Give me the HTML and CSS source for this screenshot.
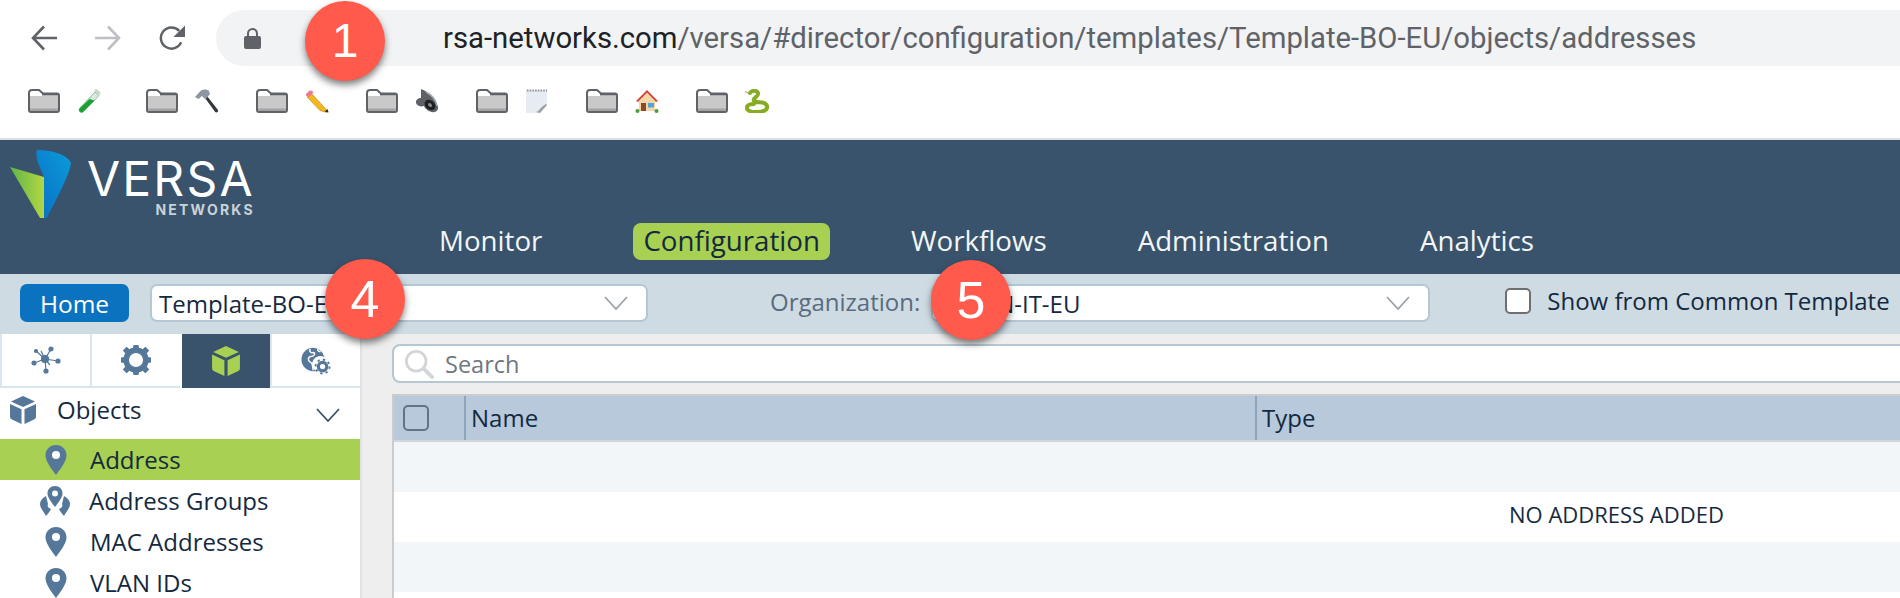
FILE: index.html
```html
<!DOCTYPE html>
<html lang="en">
<head>
  <meta charset="UTF-8" />
  <title>Versa Director - Addresses</title>
  <meta name="viewport" content="width=device-width, initial-scale=1.0" />
  <link rel="stylesheet" href="styles.css">
</head>
<body>

<svg class="icon-defs" aria-hidden="true">
  <symbol id="folder" viewBox="0 0 32 24">
    <path d="M1 4a3 3 0 0 1 3-3h7l4 3.500h14a2 2 0 0 1 2 2V21a2 2 0 0 1-2 2H3a2 2 0 0 1-2-2z" fill="#fff" stroke="#5f6368" stroke-width="2"/>
    <path d="M2 7h28v14a1 1 0 0 1-1 1H3a1 1 0 0 1-1-1z" fill="#c9c9c9"/>
    <path d="M2 19.500h28V21a1 1 0 0 1-1 1H3a1 1 0 0 1-1-1z" fill="#a3a3a3"/>
    <path d="M14 5.500h16" stroke="#5f6368" stroke-width="2"/>
  </symbol>
  <symbol id="pin" viewBox="0 0 22 30">
    <path d="M11 0C5 0 .5 4.500.5 10.500c0 6 6.500 14 10.500 19.500 4-5.500 10.500-13.500 10.500-19.500C21.500 4.500 17 0 11 0z" fill="#54779a"/>
    <circle cx="11" cy="10" r="4" fill="#fff"/>
  </symbol>
  <symbol id="cube" viewBox="0 0 26 28">
    <path d="M13 0l12 5.500-12 5.500L1 5.500z"/>
    <path d="M0 8l11.500 5.300V28L2 23.500a3 3 0 0 1-2-2.800z"/>
    <path d="M26 8l-11.500 5.300V28L24 23.500a3 3 0 0 0 2-2.800z"/>
  </symbol>
  <symbol id="chev" viewBox="0 0 24 14">
    <path d="M1 1l11 12L23 1" fill="none" stroke="currentColor" stroke-width="1.800"/>
  </symbol>
</svg>

<div class="chrome">
  <div class="browser-bar">
    <svg class="nav-icon" viewBox="0 0 26 26"><path d="M26 13H3M13 1.500L2 13l11 11.500" fill="none" stroke="#5f6368" stroke-width="2.600"/></svg>
    <svg class="nav-icon" viewBox="0 0 26 26"><path d="M0 13h23M13 1.500L24 13 13 24.500" fill="none" stroke="#bdbfc2" stroke-width="2.600"/></svg>
    <svg class="nav-icon" viewBox="0 0 27 26"><path d="M23 17.500A11 11 0 1 1 21 5.500" fill="none" stroke="#5f6368" stroke-width="2.600"/><path d="M27 0v12H15z" fill="#5f6368"/></svg>
    <div class="url-bar">
      <svg class="lock" viewBox="0 0 17 21"><path d="M4 9V5.500a4.500 4.500 0 0 1 9 0V9" fill="none" stroke="#5f6368" stroke-width="2"/><rect y="8" width="17" height="13" rx="2" fill="#5f6368"/></svg>
      <span class="url"><b>rsa-networks.com</b>/versa/#director/configuration/templates/Template-BO-EU/objects/addresses</span>
    </div>
  </div>
  <div class="bookmarks">
    <div class="bookmark bookmark-first">
      <svg class="folder"><use href="#folder"/></svg>
      <svg class="emoji" viewBox="0 0 24 24"><path d="M18 3l4 3.500L6 23c-2 1.500-5-1-3.500-3.500z" fill="#d8eadb" stroke="#9fb5a3"/><path d="M12.500 10l5 1.500L6 23c-2 1.500-5-1-3.500-3.500z" fill="#16a32e"/><path d="M18 .8l5 4" stroke="#c5d8ca" stroke-width="3"/></svg>
    </div>
    <div class="bookmark">
      <svg class="folder"><use href="#folder"/></svg>
      <svg class="emoji" viewBox="0 0 24 24"><path d="M10 9l2-2 11 14c.8 2-1.500 3-2.800 2z" fill="#33383c"/><path d="M0 8l6-6.500c3-1.500 6-1.500 8 .5l1 3-4.500 5.500L7 7 3.500 10z" fill="#8d97a1"/></svg>
    </div>
    <div class="bookmark">
      <svg class="folder"><use href="#folder"/></svg>
      <svg class="emoji" viewBox="0 0 24 24"><path d="M7 5l16 17.500-1 1-7-2L2 8z" fill="#f4b81f" stroke="#b98510" stroke-width=".6"/><path d="M1 5l3-3c2-1 3.500 0 4.500 1.500L4 8C2 7.500.5 7 1 5z" fill="#e87b8d"/><path d="M23.500 23.500l-4-1 3-2.500z" fill="#333"/></svg>
    </div>
    <div class="bookmark">
      <svg class="folder"><use href="#folder"/></svg>
      <svg class="emoji" viewBox="0 0 24 24"><path d="M6 0c8 3 15 10 17 18 .5 3-2 6-6 5-3-.5-7-3-8-6-3 1-7 0-8-3-.5-3 2-5 5-5z" fill="#5e6267"/><path d="M11 3c6 3 10 8 11 14" fill="none" stroke="#a4a9ae" stroke-width="1.500"/><ellipse cx="15" cy="16" rx="6" ry="4.500" fill="#1e2022" transform="rotate(40 15 16)"/><ellipse cx="15" cy="16" rx="2.200" ry="1.700" fill="#8a8f94" transform="rotate(40 15 16)"/></svg>
    </div>
    <div class="bookmark">
      <svg class="folder"><use href="#folder"/></svg>
      <svg class="emoji" viewBox="0 0 22 24"><path d="M0 1h21v15l-7 8H0z" fill="#e7ecf2"/><path d="M1 1.500h20" stroke="#8c9096" stroke-width="2" stroke-dasharray="1.500 1.200"/><path d="M10 23c4-1 4-5 10-8l1 1-7 8z" fill="#9aa0a6"/></svg>
    </div>
    <div class="bookmark">
      <svg class="folder"><use href="#folder"/></svg>
      <svg class="emoji" viewBox="0 0 24 24"><path d="M4 11h16v11H4z" fill="#f6d6a5"/><path d="M12 1L1 12l2 1 9-9 9 9 2-1z" fill="#d4473c"/><path d="M12 4l8 8H4z" fill="#f6d6a5"/><rect x="6" y="14" width="5" height="8" fill="#8a4b2c"/><rect x="13" y="14" width="6" height="4.500" fill="#4ea5d9"/><circle cx="2.500" cy="22" r="2" fill="#4c9a3c"/><circle cx="21.500" cy="22" r="2" fill="#4c9a3c"/></svg>
    </div>
    <div class="bookmark">
      <svg class="folder"><use href="#folder"/></svg>
      <svg class="emoji" viewBox="0 0 24 24"><path d="M5 4c2-3 7-3 8 0 1 4-6 5-4 8 3 3 11-1 13 5 1 4-4 6-10 6-6 0-11-1-10-5 .5-2 4-3 7-3" fill="none" stroke="#86ad22" stroke-width="4" stroke-linecap="round"/><path d="M0 2.500l3 1.500" stroke="#d87a8a"/></svg>
    </div>
  </div>
</div>

<header class="topbar">
  <div class="logo">
    <svg class="logo-mark" viewBox="0 0 62 68">
      <defs>
        <linearGradient id="logoGreen" x1="0" x2="1" y1="0" y2="0"><stop offset="0" stop-color="#5fb548"/><stop offset="1" stop-color="#b3d743"/></linearGradient>
        <linearGradient id="logoBlue" x1="0" x2="1" y1="1" y2="0"><stop offset="0" stop-color="#0a6fc2"/><stop offset="1" stop-color="#0a9bdc"/></linearGradient>
      </defs>
      <path d="M0 17l34 10v41h-4z" fill="url(#logoGreen)"/>
      <path d="M27 0c14 0 30 4 34 13-2 14-17 40-24 55h-3V27l-3-7c-3-7-6-14-4-20z" fill="url(#logoBlue)"/>
    </svg>
    <div class="logo-text">
      <span class="logo-name">VERSA</span>
      <span class="logo-sub">NETWORKS</span>
    </div>
  </div>
  <nav class="main-nav">
    <a href="#" class="nav-first">Monitor</a>
    <a href="#" class="active">Configuration</a>
    <a href="#">Workflows</a>
    <a href="#">Administration</a>
    <a href="#">Analytics</a>
  </nav>
</header>

<div class="toolbar">
  <button class="home-btn">Home</button>
  <div class="select select-template">
    <span>Template-BO-EU</span>
    <svg class="chev"><use href="#chev"/></svg>
  </div>
  <label class="org-label">Organization:</label>
  <div class="select select-org">
    <span>RSA-N-IT-EU</span>
    <svg class="chev"><use href="#chev"/></svg>
  </div>
  <div class="check-box"></div>
  <span class="check-label">Show from Common Template</span>
</div>

<div class="content">
  <aside class="sidebar">
    <div class="tabs">
      <div class="tab">
        <svg class="tab-icon" viewBox="0 0 30 30" fill="#54779a" stroke="#54779a" stroke-width="1.200">
          <circle cx="14" cy="14" r="3.500"/>
          <path d="M14 14L5 6M14 14L20 4M14 14l13 2M14 14L3 18M14 14l1 12M14 14l-4-8M14 14l5 6" fill="none"/>
          <circle cx="5" cy="6" r="1.500"/><circle cx="20" cy="4" r="2"/><circle cx="27" cy="16" r="2"/><circle cx="3" cy="18" r="2"/><circle cx="15" cy="26" r="2"/>
        </svg>
      </div>
      <div class="tab">
        <svg class="tab-icon" viewBox="0 0 32 32"><circle cx="16" cy="16" r="10.500" fill="none" stroke="#54779a" stroke-width="6"/><g fill="#54779a"><rect x="13" y="0" width="6" height="6" rx="1"/><rect x="13" y="26" width="6" height="6" rx="1"/><rect x="0" y="13" width="6" height="6" rx="1"/><rect x="26" y="13" width="6" height="6" rx="1"/><rect x="3" y="3" width="6" height="6" rx="1" transform="rotate(45 6 6)"/><rect x="23" y="3" width="6" height="6" rx="1" transform="rotate(45 26 6)"/><rect x="3" y="23" width="6" height="6" rx="1" transform="rotate(45 6 26)"/><rect x="23" y="23" width="6" height="6" rx="1" transform="rotate(45 26 26)"/></g></svg>
      </div>
      <div class="tab tab-active">
        <svg class="tab-icon cube"><use href="#cube"/></svg>
      </div>
      <div class="tab">
        <svg class="tab-icon" viewBox="0 0 30 32">
          <path d="M12 3a12.500 12.500 0 1 0 0 25 13 13 0 0 0 3-.400 8 8 0 0 1 9-14.600 12.500 12.500 0 0 0-12-10z" fill="#54779a"/>
          <path d="M9 4c-2 3 1 5 3 4 3 0 1 4-1 4s-5 1-4 4 4 2 4 5l1 6M17 4c-1 2 1 3 3 3" fill="none" stroke="#fff" stroke-width="1.500"/>
          <circle cx="22" cy="23" r="4.500" fill="none" stroke="#54779a" stroke-width="3.400"/>
          <circle cx="22" cy="23" r="7.500" fill="none" stroke="#54779a" stroke-width="2" stroke-dasharray="2.500 3.400"/>
        </svg>
      </div>
    </div>
    <div class="objects-head">
      <svg class="objects-icon"><use href="#cube"/></svg>
      <span>Objects</span>
      <svg class="objects-chev"><use href="#chev"/></svg>
    </div>
    <ul class="object-list">
      <li class="selected"><svg class="pin"><use href="#pin"/></svg>Address</li>
      <li>
        <svg class="pin pin-group" viewBox="0 0 30 30">
          <path d="M15 0c-4.500 0-7.500 3.200-7.500 7.500S12 17 15 21c3-4 7.500-9.200 7.500-13.500S19.500 0 15 0z" fill="#54779a"/>
          <circle cx="15" cy="7.500" r="3" fill="#fff"/>
          <path d="M6 10C2 12 0 15 0 18c0 4 4 8 6 12 2-2 4-5 5-7-3-1-4-3-3-5zM24 10c4 2 6 5 6 8 0 4-4 8-6 12-2-2-4-5-5-7 3-1 4-3 3-5z" fill="#54779a"/>
        </svg>Address Groups
      </li>
      <li><svg class="pin"><use href="#pin"/></svg>MAC Addresses</li>
      <li><svg class="pin"><use href="#pin"/></svg>VLAN IDs</li>
    </ul>
  </aside>

  <main class="main">
    <div class="search">
      <svg class="search-icon" viewBox="0 0 32 32"><circle cx="13" cy="13" r="10.500" fill="none" stroke="#d3d6d8" stroke-width="3"/><path d="M21 21l9 9" stroke="#d3d6d8" stroke-width="4" stroke-linecap="round"/></svg>
      <span>Search</span>
    </div>
    <div class="table">
      <div class="table-head">
        <div class="col-check"><span class="head-check"></span></div>
        <div class="col-name">Name</div>
        <div class="col-type">Type</div>
      </div>
      <div class="table-row"></div>
      <div class="table-row">NO ADDRESS ADDED</div>
      <div class="table-row"></div>
      <div class="table-row"></div>
    </div>
  </main>
</div>

<div class="badge badge-url">1</div>
<div class="badge badge-template">4</div>
<div class="badge badge-org">5</div>

</body>
</html>
```

FILE: styles.css
```css
* {
  box-sizing: border-box;
}
html, body {
  height: 598px;
}
body {
  margin: 0;
  overflow: hidden;
  position: relative;
  background: #fff;
  color: #14293f;
  font-family: 'Open Sans', sans-serif;
}
.icon-defs {
  position: absolute;
  width: 0;
  height: 0;
}

/* browser chrome */
.chrome {
  height: 140px;
  background: #fff;
  border-bottom: 2px solid #dedede;
}
.browser-bar {
  display: flex;
  align-items: center;
  height: 79px;
  padding: 0 0 3px 31px;
}
.nav-icon {
  width: 26px;
  height: 26px;
  margin-right: 38px;
}
.url-bar {
  display: flex;
  align-items: center;
  flex: 1;
  height: 56px;
  margin-left: -7px;
  padding-left: 28px;
  background: #f1f3f4;
  border-radius: 28px 0 0 28px;
}
.lock {
  width: 17px;
  height: 21px;
  margin-right: 182px;
}
.url {
  font-family: Roboto, sans-serif;
  font-size: 29.3px;
  color: #5f6368;
  white-space: nowrap;
}
.url b {
  font-weight: 400;
  color: #202124;
}
.bookmarks {
  display: flex;
  padding: 10px 0 0 28px;
}
.bookmark {
  display: flex;
  align-items: center;
  gap: 17px;
  width: 110px;
  height: 24px;
}
.bookmark-first {
  width: 118px;
}
.folder {
  width: 32px;
  height: 24px;
}
.emoji {
  width: 24px;
  height: 24px;
}

/* versa header */
.topbar {
  height: 134px;
  padding: 10px 0 0 10px;
  background: #38536b;
}
.logo {
  display: flex;
}
.logo-mark {
  width: 62px;
  height: 68px;
}
.logo-text {
  display: flex;
  flex-direction: column;
  align-items: flex-end;
  margin-left: 15px;
  color: #fff;
  font-family: Inter, sans-serif;
  line-height: 1;
}
.logo-name {
  margin-top: 5px;
  font-size: 48px;
  letter-spacing: 2.2px;
}
.logo-sub {
  font-size: 14px;
  font-weight: 700;
  letter-spacing: 2.2px;
  color: #c9d2da;
}
.main-nav {
  display: flex;
  gap: 71px;
  margin: 5px 0 0 419px;
}
.main-nav a {
  height: 37px;
  padding: 0 10px;
  border-radius: 8px;
  color: #f3f5f7;
  font-size: 27.7px;
  line-height: 35px;
  text-decoration: none;
}
.main-nav a.nav-first {
  margin-right: 10px;
}
.main-nav a.active {
  background: #a8d052;
  color: #14293f;
}

/* toolbar */
.toolbar {
  display: flex;
  align-items: center;
  height: 60px;
  padding: 0 0 2px 20px;
  background: #cedbe3;
  font-size: 24px;
  white-space: nowrap;
}
.home-btn {
  width: 109px;
  height: 38px;
  margin-right: 21px;
  padding: 0;
  background: #0b72c0;
  border: none;
  border-radius: 7px;
  color: #fff;
  font-family: 'Open Sans', sans-serif;
  font-size: 24.5px;
}
.select {
  display: flex;
  align-items: center;
  justify-content: space-between;
  flex: none;
  height: 38px;
  padding: 0 18px 0 7px;
  background: #fff;
  border: 2px solid #b3c8d4;
  border-radius: 7px;
}
.select-template {
  width: 498px;
}
.select-org {
  width: 499px;
  padding-left: 12px;
}
.chev {
  width: 24px;
  height: 14px;
  color: #9ba3a9;
}
.org-label {
  margin: 0 11px 4px 122px;
  color: #5a6b80;
}
.check-box {
  flex: none;
  width: 26px;
  height: 26px;
  margin: 0 16px 4px 75px;
  background: #fff;
  border: 2px solid #6d6f71;
  border-radius: 5px;
}
.check-label {
  margin-bottom: 6px;
}

/* sidebar and table */
.content {
  display: flex;
  height: 264px;
  background: #eee;
  overflow: hidden;
}
.sidebar {
  flex: none;
  width: 362px;
  background: #fff;
  border-right: 2px solid #dfe3e6;
  overflow: hidden;
}
.tabs {
  display: flex;
  height: 54px;
}
.tab {
  display: flex;
  align-items: center;
  justify-content: center;
  width: 90px;
  border-left: 2px solid #dbe5ec;
  border-bottom: 2px solid #dbe5ec;
}
.tab-active {
  background: #38536b;
  border-color: #fff;
  border-bottom: none;
}
.tab-icon {
  width: 30px;
  height: 30px;
}
.cube {
  fill: #a8d052;
}
.objects-head {
  display: flex;
  align-items: center;
  height: 51px;
  padding: 0 20px 8px 10px;
  font-size: 24px;
}
.objects-icon {
  width: 26px;
  height: 28px;
  margin-right: 21px;
  fill: #54779a;
}
.objects-chev {
  width: 24px;
  height: 14px;
  margin: 10px 0 0 auto;
  color: #38536b;
}
.object-list {
  margin: 0;
  padding: 0;
  list-style: none;
}
.object-list li {
  display: flex;
  align-items: center;
  height: 41px;
  padding-left: 45px;
  font-size: 24px;
}
.object-list li.selected {
  background: #a8d052;
}
.pin {
  width: 22px;
  height: 30px;
  margin-right: 23px;
}
.pin-group {
  width: 30px;
  margin: 0 19px 0 -5px;
}
.main {
  flex: 1;
  min-width: 0;
  padding: 10px 0 0 30px;
}
.search {
  display: flex;
  align-items: center;
  height: 39px;
  margin-right: -20px;
  padding-left: 10px;
  background: #fff;
  border: 2px solid #b3c8d4;
  border-radius: 8px;
  color: #6f7780;
  font-size: 23.5px;
}
.search-icon {
  width: 30px;
  height: 30px;
  margin-right: 11px;
}
.table {
  margin-top: 11px;
  border-left: 2px solid #ccc;
  background: #fff;
}
.table-head {
  display: flex;
  height: 48px;
  background: #b7c9db;
  border-top: 2px solid #ccc;
  border-bottom: 2px solid #d3d6d8;
  font-size: 24px;
  line-height: 44px;
}
.col-check {
  display: flex;
  align-items: center;
  width: 72px;
  padding-left: 9px;
  border-right: 2px solid #8ea6bc;
}
.head-check {
  width: 26px;
  height: 26px;
  border: 2px solid #5f7488;
  border-radius: 5px;
}
.col-name {
  width: 791px;
  padding-left: 5px;
  border-right: 2px solid #8ea6bc;
}
.col-type {
  padding-left: 5px;
}
.table-row {
  height: 50px;
  padding-left: 1115px;
  background: #fff;
  font-size: 22px;
  line-height: 44px;
}
.table-row:nth-child(even) {
  background: #f3f6f9;
}

/* callouts on top of the screenshot */
.badge {
  position: absolute;
  width: 80px;
  height: 80px;
  background: #ff5a4c;
  border-radius: 50%;
  box-shadow: 0 4px 7px rgba(0, 0, 0, 0.5);
  color: #fff;
  font-family: 'Liberation Sans', sans-serif;
  font-size: 52px;
  line-height: 80px;
  text-align: center;
}
.badge-url {
  top: 1px;
  left: 305px;
  font-size: 48px;
}
.badge-template {
  top: 259px;
  left: 325px;
}
.badge-org {
  top: 260px;
  left: 931px;
}
```
